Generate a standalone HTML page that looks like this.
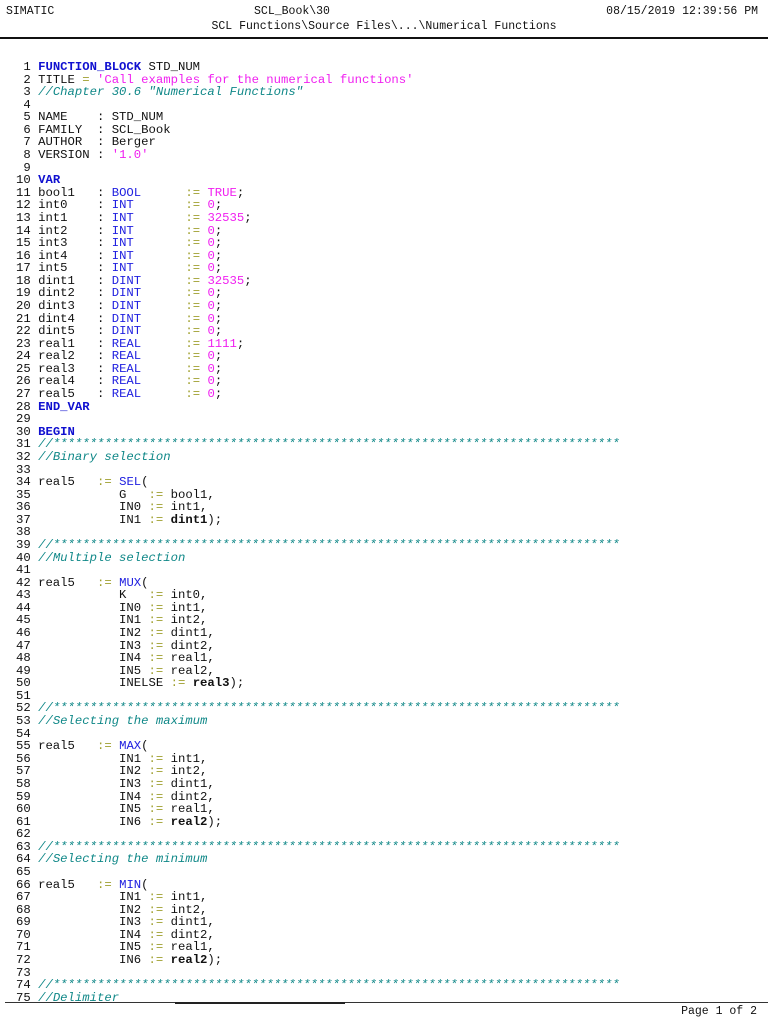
<!DOCTYPE html>
<html><head><meta charset="utf-8">
<style>
html,body{margin:0;padding:0;background:#fff;}
body{width:768px;height:1024px;position:relative;overflow:hidden;font-family:"Liberation Mono",monospace;color:#111;}
.h{position:absolute;font-size:11.5px;white-space:pre;line-height:14px;}
pre{position:absolute;left:16px;top:61px;margin:0;font-family:"Liberation Mono",monospace;font-size:12.28px;line-height:12.58px;color:#111;}
.k{color:#1010d0;font-weight:bold}
.t{color:#2020e0}
.o{color:#a0a030}
.s{color:#f020f0}
.c{color:#108888;font-style:italic}
.b{font-weight:bold}
</style></head><body>
<div class="h" style="left:6px;top:5px">SIMATIC</div>
<div class="h" style="left:230px;top:5px;width:124px;text-align:center">SCL_Book\30</div>
<div class="h" style="right:10px;top:5px">08/15/2019 12:39:56 PM</div>
<div class="h" style="left:0;width:768px;top:20px;text-align:center">SCL Functions\Source Files\...\Numerical Functions</div>
<div style="position:absolute;left:0;top:37px;width:768px;height:2px;background:#111"></div>
<div style="position:absolute;left:5px;top:1002px;width:763px;height:1px;background:#333"></div>
<div style="position:absolute;left:175px;top:1002px;width:170px;height:2px;background:#222"></div>
<div class="h" style="right:11px;top:1005px">Page 1 of 2</div>
<pre> 1 <span class="k">FUNCTION_BLOCK</span> STD_NUM
 2 TITLE <span class="o">=</span> <span class="s">'Call examples for the numerical functions'</span>
 3 <span class="c">//Chapter 30.6 "Numerical Functions"</span>
 4 
 5 NAME    : STD_NUM
 6 FAMILY  : SCL_Book
 7 AUTHOR  : Berger
 8 VERSION : <span class="s">'1.0'</span>
 9 
10 <span class="k">VAR</span>
11 bool1   : <span class="t">BOOL</span>      <span class="o">:=</span> <span class="s">TRUE</span>;
12 int0    : <span class="t">INT</span>       <span class="o">:=</span> <span class="s">0</span>;
13 int1    : <span class="t">INT</span>       <span class="o">:=</span> <span class="s">32535</span>;
14 int2    : <span class="t">INT</span>       <span class="o">:=</span> <span class="s">0</span>;
15 int3    : <span class="t">INT</span>       <span class="o">:=</span> <span class="s">0</span>;
16 int4    : <span class="t">INT</span>       <span class="o">:=</span> <span class="s">0</span>;
17 int5    : <span class="t">INT</span>       <span class="o">:=</span> <span class="s">0</span>;
18 dint1   : <span class="t">DINT</span>      <span class="o">:=</span> <span class="s">32535</span>;
19 dint2   : <span class="t">DINT</span>      <span class="o">:=</span> <span class="s">0</span>;
20 dint3   : <span class="t">DINT</span>      <span class="o">:=</span> <span class="s">0</span>;
21 dint4   : <span class="t">DINT</span>      <span class="o">:=</span> <span class="s">0</span>;
22 dint5   : <span class="t">DINT</span>      <span class="o">:=</span> <span class="s">0</span>;
23 real1   : <span class="t">REAL</span>      <span class="o">:=</span> <span class="s">1111</span>;
24 real2   : <span class="t">REAL</span>      <span class="o">:=</span> <span class="s">0</span>;
25 real3   : <span class="t">REAL</span>      <span class="o">:=</span> <span class="s">0</span>;
26 real4   : <span class="t">REAL</span>      <span class="o">:=</span> <span class="s">0</span>;
27 real5   : <span class="t">REAL</span>      <span class="o">:=</span> <span class="s">0</span>;
28 <span class="k">END_VAR</span>
29 
30 <span class="k">BEGIN</span>
31 <span class="c">//*****************************************************************************</span>
32 <span class="c">//Binary selection</span>
33 
34 real5   <span class="o">:=</span> <span class="t">SEL</span>(
35            G   <span class="o">:=</span> bool1,
36            IN0 <span class="o">:=</span> int1,
37            IN1 <span class="o">:=</span> <span class="b">dint1</span>);
38 
39 <span class="c">//*****************************************************************************</span>
40 <span class="c">//Multiple selection</span>
41 
42 real5   <span class="o">:=</span> <span class="t">MUX</span>(
43            K   <span class="o">:=</span> int0,
44            IN0 <span class="o">:=</span> int1,
45            IN1 <span class="o">:=</span> int2,
46            IN2 <span class="o">:=</span> dint1,
47            IN3 <span class="o">:=</span> dint2,
48            IN4 <span class="o">:=</span> real1,
49            IN5 <span class="o">:=</span> real2,
50            INELSE <span class="o">:=</span> <span class="b">real3</span>);
51 
52 <span class="c">//*****************************************************************************</span>
53 <span class="c">//Selecting the maximum</span>
54 
55 real5   <span class="o">:=</span> <span class="t">MAX</span>(
56            IN1 <span class="o">:=</span> int1,
57            IN2 <span class="o">:=</span> int2,
58            IN3 <span class="o">:=</span> dint1,
59            IN4 <span class="o">:=</span> dint2,
60            IN5 <span class="o">:=</span> real1,
61            IN6 <span class="o">:=</span> <span class="b">real2</span>);
62 
63 <span class="c">//*****************************************************************************</span>
64 <span class="c">//Selecting the minimum</span>
65 
66 real5   <span class="o">:=</span> <span class="t">MIN</span>(
67            IN1 <span class="o">:=</span> int1,
68            IN2 <span class="o">:=</span> int2,
69            IN3 <span class="o">:=</span> dint1,
70            IN4 <span class="o">:=</span> dint2,
71            IN5 <span class="o">:=</span> real1,
72            IN6 <span class="o">:=</span> <span class="b">real2</span>);
73 
74 <span class="c">//*****************************************************************************</span>
75 <span class="c">//Delimiter</span></pre>
</body></html>
